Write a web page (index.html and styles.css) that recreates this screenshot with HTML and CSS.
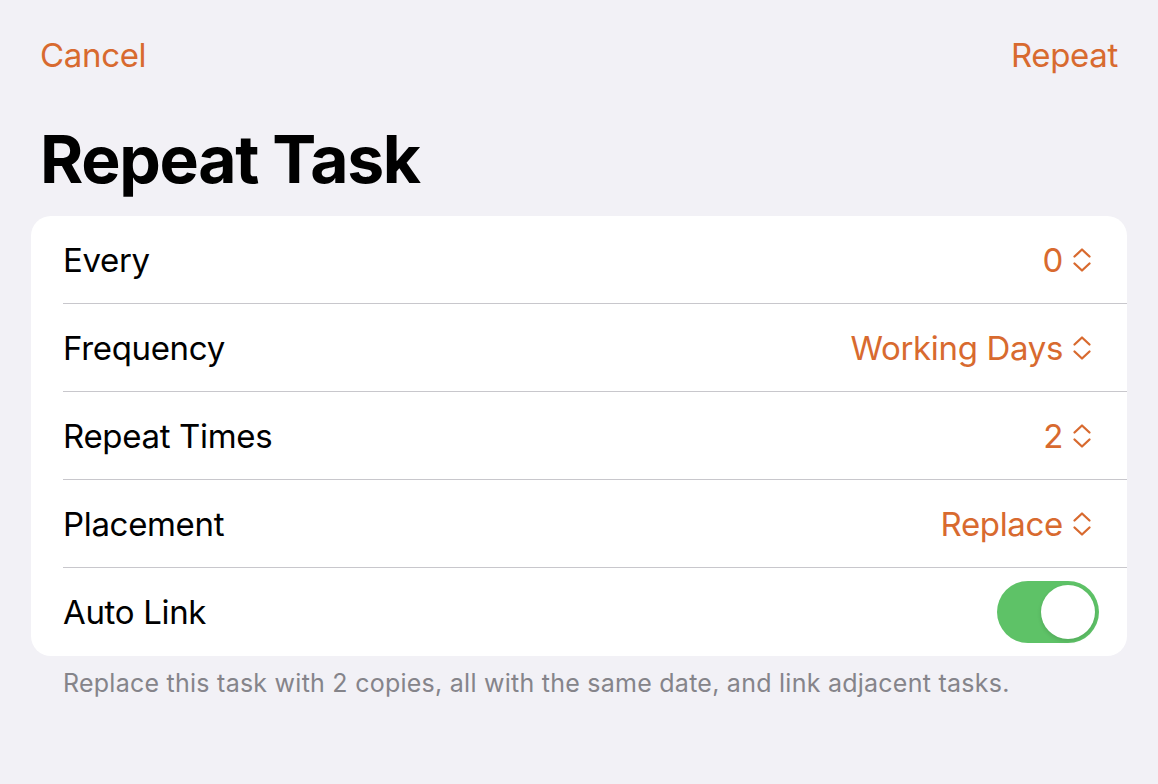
FILE: index.html
```html
<!DOCTYPE html>
<html lang="en">
<head>
  <meta charset="UTF-8">
  <meta name="viewport" content="width=device-width, initial-scale=1.0">
  <title>Repeat Task</title>
  <link rel="stylesheet" href="styles.css">
</head>
<body>
  <div class="sheet">
    <div class="nav-bar">
      <span class="nav-btn">Cancel</span>
      <span class="nav-btn">Repeat</span>
    </div>

    <h1 class="title">Repeat Task</h1>

    <div class="group">
      <div class="row">
        <div class="row-inner">
          <span class="label">Every</span>
          <span class="value">0 <svg class="updown" viewBox="0 0 20 26"><path d="M2.5 9.5 L10 2.5 L17.5 9.5 M2.5 16.5 L10 23.5 L17.5 16.5"/></svg></span>
        </div>
      </div>
      <div class="row">
        <div class="row-inner">
          <span class="label">Frequency</span>
          <span class="value">Working Days <svg class="updown" viewBox="0 0 20 26"><path d="M2.5 9.5 L10 2.5 L17.5 9.5 M2.5 16.5 L10 23.5 L17.5 16.5"/></svg></span>
        </div>
      </div>
      <div class="row">
        <div class="row-inner">
          <span class="label">Repeat Times</span>
          <span class="value">2 <svg class="updown" viewBox="0 0 20 26"><path d="M2.5 9.5 L10 2.5 L17.5 9.5 M2.5 16.5 L10 23.5 L17.5 16.5"/></svg></span>
        </div>
      </div>
      <div class="row">
        <div class="row-inner">
          <span class="label">Placement</span>
          <span class="value">Replace <svg class="updown" viewBox="0 0 20 26"><path d="M2.5 9.5 L10 2.5 L17.5 9.5 M2.5 16.5 L10 23.5 L17.5 16.5"/></svg></span>
        </div>
      </div>
      <div class="row">
        <div class="row-inner last">
          <span class="label">Auto Link</span>
          <span class="toggle on"><span class="knob"></span></span>
        </div>
      </div>
    </div>

    <p class="footer">Replace this task with 2 copies, all with the same date, and link adjacent tasks.</p>
  </div>
</body>
</html>
```

FILE: styles.css
```css
* {
  box-sizing: border-box;
}

body {
  margin: 0;
  background-color: #f2f1f6;
  font-family: Inter, "Noto Sans", sans-serif;
  color: #000;
  min-height: 100vh;
}

.sheet {
  padding: 0 31px;
}

.nav-bar {
  display: flex;
  justify-content: space-between;
  align-items: center;
  padding: 27px 9px 0;
}

.nav-btn {
  font-size: 33px;
  line-height: 56px;
  color: #d86a2f;
  letter-spacing: -0.01em;
}

.title {
  margin: 32px 0 13px 9px;
  font-size: 66px;
  font-weight: 700;
  line-height: 88px;
  letter-spacing: -0.02em;
}

.group {
  background: #fff;
  border-radius: 20px;
  overflow: hidden;
}

.row {
  padding-left: 32px;
}

.row-inner {
  display: flex;
  justify-content: space-between;
  align-items: center;
  height: 88px;
  padding-right: 28px;
  border-bottom: 1px solid #c8c7cc;
}

.row-inner.last {
  border-bottom: none;
}

.label {
  font-size: 33px;
  letter-spacing: -0.01em;
}

.value {
  display: flex;
  align-items: center;
  gap: 9px;
  font-size: 33px;
  letter-spacing: -0.01em;
  color: #d86a2f;
  padding-right: 7px;
}

.updown {
  width: 20px;
  height: 26px;
  fill: none;
  stroke: #d86a2f;
  stroke-width: 2.3;
  stroke-linecap: round;
  stroke-linejoin: round;
}

.toggle {
  display: flex;
  align-items: center;
  width: 102px;
  height: 62px;
  border-radius: 31px;
  background: #5ec267;
  padding: 4px;
}

.toggle.on {
  justify-content: flex-end;
}

.knob {
  width: 54px;
  height: 54px;
  border-radius: 50%;
  background: #fff;
  box-shadow: 0 2px 4px rgba(0, 0, 0, 0.12);
}

.footer {
  margin: 12px 0 0 32px;
  font-size: 25px;
  line-height: 30px;
  color: #85848a;
  letter-spacing: 0.01em;
}
```
